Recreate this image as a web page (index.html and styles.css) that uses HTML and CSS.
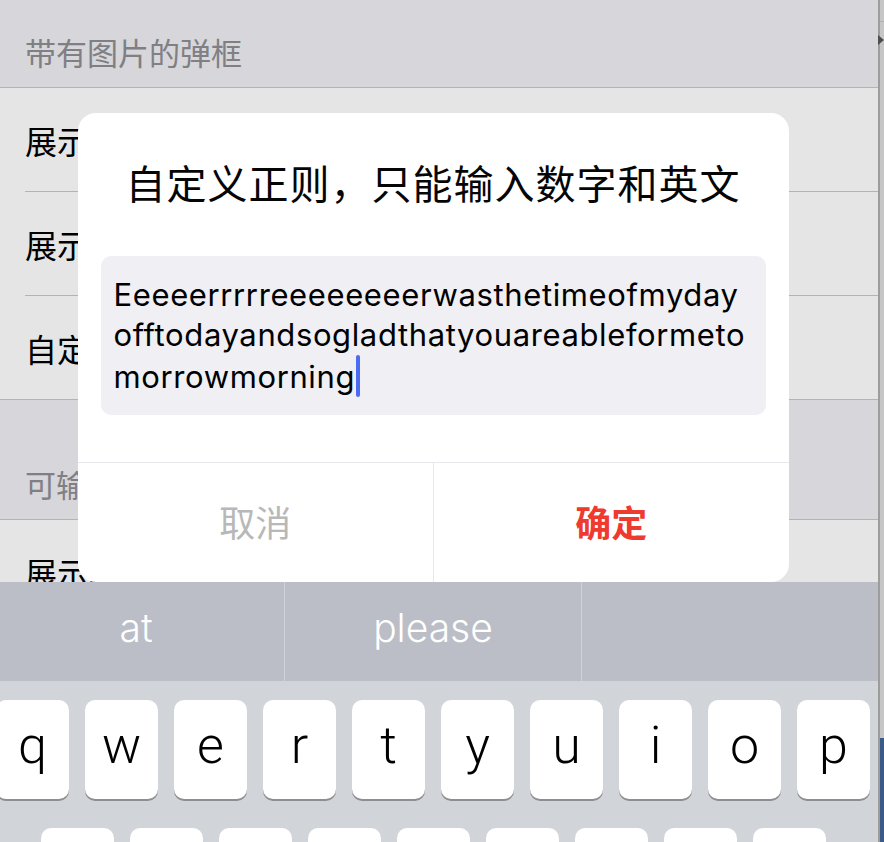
FILE: index.html
```html
<!DOCTYPE html>
<html lang="zh-CN">
<head>
<meta charset="utf-8">
<title>弹框</title>
<link rel="stylesheet" href="styles.css">
</head>
<body>
<div class="device">
  <div class="screen">
    <div class="page">
      <div class="list">
        <div class="section-title">带有图片的弹框</div>
        <div class="group">
          <div class="cell">展示带图片的弹框</div>
          <div class="cell">展示带图片和输入框的弹框</div>
          <div class="cell">自定义正则的输入框弹框</div>
        </div>
        <div class="section-title">可输入的弹框</div>
        <div class="group">
          <div class="cell">展示输入框弹框</div>
        </div>
      </div>
      <div class="mask">
        <div class="dialog">
          <div class="dialog-title">自定义正则，只能输入数字和英文</div>
          <div class="dialog-input">Eeeeerrrrreeeeeeeerwasthetimeofmyday<br>offtodayandsogladthatyouareableformeto<br>morrowmorning<span class="caret"></span></div>
          <div class="dialog-actions">
            <div class="action cancel">取消</div>
            <div class="action confirm">确定</div>
          </div>
        </div>
      </div>
    </div>
    <div class="keyboard">
      <div class="suggestions">
        <div class="suggestion">at</div>
        <div class="suggestion">please</div>
        <div class="suggestion"></div>
      </div>
      <div class="keys">
        <div class="key-row">
          <div class="key">q</div><div class="key">w</div><div class="key">e</div><div class="key">r</div><div class="key">t</div><div class="key">y</div><div class="key">u</div><div class="key">i</div><div class="key">o</div><div class="key">p</div>
        </div>
        <div class="key-row">
          <div class="key">a</div><div class="key">s</div><div class="key">d</div><div class="key">f</div><div class="key">g</div><div class="key">h</div><div class="key">j</div><div class="key">k</div><div class="key">l</div>
        </div>
      </div>
    </div>
  </div>
  <div class="edge">
    <div class="edge-top"></div>
    <div class="edge-arrow"></div>
    <div class="edge-fill"></div>
    <div class="edge-blue"></div>
  </div>
</div>
</body>
</html>
```

FILE: styles.css
```css
* {
  box-sizing: border-box;
  margin: 0;
  padding: 0;
}

html,
body {
  width: 884px;
  height: 842px;
  overflow: hidden;
}

body {
  font-family: "Noto Sans CJK SC", "Noto Sans", sans-serif;
  background: #c6c6c6;
}

.device {
  display: flex;
  width: 884px;
  height: 842px;
}

.screen {
  width: 890px;
  margin-left: -12px;
  height: 842px;
  flex: none;
  display: flex;
  flex-direction: column;
  overflow: hidden;
}

/* ---------- page behind the dialog ---------- */
.page {
  position: relative;
  height: 582px;
  flex: none;
  overflow: hidden;
  background: #efeff4;
}

.list {
  margin-top: -32px;
}

.section-title {
  height: 120px;
  display: flex;
  align-items: flex-end;
  padding: 0 0 15px 37px;
  font-size: 31px;
  line-height: 40px;
  color: #8e8e93;
  border-bottom: 1px solid #c8c7cc;
}

.group {
  background: #ffffff;
  border-bottom: 1px solid #c8c7cc;
}

.cell {
  margin-left: 37px;
  height: 104px;
  border-bottom: 1px solid #c8c7cc;
  display: flex;
  align-items: center;
  font-size: 32px;
  color: #000000;
  white-space: nowrap;
}

.cell:last-child {
  height: 103px;
  border-bottom: none;
}

.mask {
  position: absolute;
  inset: 0;
  background: rgba(0, 0, 0, 0.1);
  display: flex;
  justify-content: center;
  align-items: flex-start;
  padding-top: 113px;
}

/* ---------- dialog ---------- */
.dialog {
  width: 711px;
  height: 469px;
  background: #ffffff;
  border-radius: 18px;
  display: flex;
  flex-direction: column;
  overflow: hidden;
}

.dialog-title {
  padding-top: 41px;
  font-size: 40px;
  line-height: 56px;
  letter-spacing: 1px;
  text-align: center;
  color: #050505;
  white-space: nowrap;
}

.dialog-input {
  margin: 46px 23px 0;
  padding: 19px 13px 18px;
  background: #efeff4;
  border-radius: 10px;
  font-family: "Inter", "Noto Sans", sans-serif;
  font-size: 31px;
  line-height: 40px;
  letter-spacing: 0.62px;
  color: #000000;
  white-space: nowrap;
}

.caret {
  display: inline-block;
  width: 4px;
  height: 42px;
  margin-left: 1px;
  vertical-align: -9px;
  background: #4b6cf2;
  border-radius: 2px;
}

.dialog-actions {
  margin-top: auto;
  height: 120px;
  border-top: 1px solid #e8e8ec;
  display: grid;
  grid-template-columns: 1fr 1fr;
}

.action {
  display: flex;
  align-items: center;
  justify-content: center;
  padding-bottom: 4px;
  font-size: 36px;
  line-height: 1;
}

.action + .action {
  border-left: 1px solid #e8e8ec;
}

.cancel {
  color: #b8b8b8;
}

.confirm {
  color: #ef3a30;
  font-weight: 700;
}

/* ---------- keyboard ---------- */
.keyboard {
  flex: 1;
  background: #d1d4d9;
  overflow: hidden;
}

.suggestions {
  height: 99px;
  display: flex;
  background: #bbbec6;
}

.suggestion {
  flex: 1;
  display: flex;
  align-items: center;
  justify-content: center;
  padding-bottom: 8px;
  font-family: "Inter", "Noto Sans", sans-serif;
  font-weight: 300;
  font-size: 39px;
  color: #ffffff;
}

.suggestion + .suggestion {
  border-left: 1px solid #d0d2d7;
}

.keys {
  padding-top: 19px;
  display: flex;
  flex-direction: column;
  gap: 29px;
}

.key-row {
  display: flex;
  justify-content: center;
  gap: 16px;
}

.key {
  width: 73px;
  height: 99px;
  flex: none;
  background: #ffffff;
  border-radius: 10px;
  box-shadow: 0 2px 0 #8d8e92;
  display: flex;
  align-items: center;
  justify-content: center;
  padding-bottom: 8px;
  font-family: "Roboto", "Liberation Sans", sans-serif;
  font-weight: 300;
  font-size: 52px;
  line-height: 1;
  color: #000000;
}

/* ---------- right window edge ---------- */
.edge {
  width: 6px;
  flex: none;
  display: flex;
  flex-direction: column;
  background: #c6c6c6;
  border-left: 2px solid #9c9c9c;
}

.edge-top {
  height: 22px;
  border-bottom: 1px solid #b2b2b2;
}

.edge-arrow {
  width: 0;
  height: 0;
  margin: 13px 0 0 -2px;
  border-top: 5px solid transparent;
  border-bottom: 5px solid transparent;
  border-left: 6px solid #4d4d4d;
}

.edge-fill {
  flex: 1;
}

.edge-blue {
  height: 104px;
  background: #3c5a87;
}
```
